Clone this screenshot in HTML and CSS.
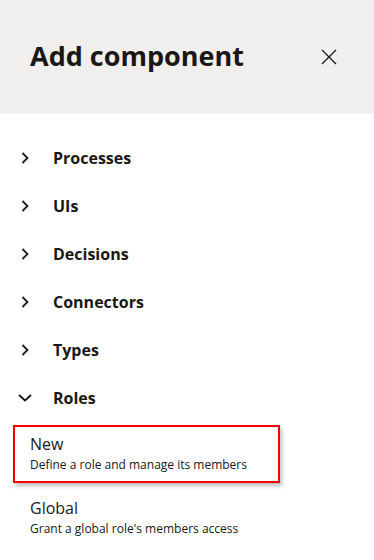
FILE: index.html
```html
<!DOCTYPE html>
<html>
    <head>
        <title>Add component</title>
        <link rel="stylesheet" href="styles.css">
    </head>
    <body>
        <div class="panel">
            <div class="header">
                <div class="title">Add component</div>
                <div class="close">
                    <svg width="16" height="16" viewBox="0 0 16 16"><path d="M1 1L15 15M15 1L1 15" stroke="#1a1816" stroke-width="1.3" fill="none"/></svg>
                </div>
            </div>
            <div class="list">
                <div class="group">
                    <span class="chev"><svg width="12" height="12" viewBox="0 0 12 12"><path d="M3.5 1L8.5 6L3.5 11" stroke="#1a1816" stroke-width="1.8" fill="none"/></svg></span>
                    <span class="label">Processes</span>
                </div>
                <div class="group">
                    <span class="chev"><svg width="12" height="12" viewBox="0 0 12 12"><path d="M3.5 1L8.5 6L3.5 11" stroke="#1a1816" stroke-width="1.8" fill="none"/></svg></span>
                    <span class="label">UIs</span>
                </div>
                <div class="group">
                    <span class="chev"><svg width="12" height="12" viewBox="0 0 12 12"><path d="M3.5 1L8.5 6L3.5 11" stroke="#1a1816" stroke-width="1.8" fill="none"/></svg></span>
                    <span class="label">Decisions</span>
                </div>
                <div class="group">
                    <span class="chev"><svg width="12" height="12" viewBox="0 0 12 12"><path d="M3.5 1L8.5 6L3.5 11" stroke="#1a1816" stroke-width="1.8" fill="none"/></svg></span>
                    <span class="label">Connectors</span>
                </div>
                <div class="group">
                    <span class="chev"><svg width="12" height="12" viewBox="0 0 12 12"><path d="M3.5 1L8.5 6L3.5 11" stroke="#1a1816" stroke-width="1.8" fill="none"/></svg></span>
                    <span class="label">Types</span>
                </div>
                <div class="group">
                    <span class="chev"><svg width="14" height="12" viewBox="0 0 14 12"><path d="M1 3L7 8.5L13 3" stroke="#1a1816" stroke-width="1.8" fill="none"/></svg></span>
                    <span class="label">Roles</span>
                </div>
                <div class="items">
                    <div class="item selected">
                        <div class="name">New</div>
                        <div class="desc">Define a role and manage its members</div>
                    </div>
                    <div class="item">
                        <div class="name">Global</div>
                        <div class="desc">Grant a global role's members access</div>
                    </div>
                </div>
            </div>
        </div>
    </body>
</html>
```
FILE: styles.css
```css
body{
    margin: 0px;
    padding: 0px;
    background: #ffffff;
    font-family: "Open Sans", "Noto Sans", sans-serif;
    color: #1a1816;
}
.panel{
    width: 374px;
    height: 560px;
    overflow: hidden;
}
.header{
    height: 114px;
    background-color: #f1efed;
    display: flex;
    align-items: center;
    justify-content: space-between;
    padding: 0 37px 0 30px;
}
.header .title{
    font-size: 27px;
    font-weight: bold;
    line-height: 36px;
    margin-top: -2px;
}
.header .close{
    width: 16px;
    height: 16px;
    display: flex;
}
.list{
    padding-top: 20px;
}
.group{
    height: 48px;
    display: flex;
    align-items: center;
}
.group .chev{
    width: 53px;
    display: flex;
    justify-content: center;
    box-sizing: border-box;
    padding-right: 4px;
}
.group .label{
    font-size: 16px;
    font-weight: bold;
}
.items{
    padding: 3px 0 0 13px;
}
.item{
    width: 267px;
    height: 58px;
    box-sizing: border-box;
    padding: 6px 0 0 15px;
    border: 2px solid transparent;
}
.item.selected{
    border-color: #f70000;
    box-shadow: 2px 3px 4px rgba(0,0,0,0.25);
    margin-bottom: 6px;
}
.item .name{
    font-size: 16px;
    line-height: 22px;
}
.item .desc{
    font-size: 12px;
    line-height: 20px;
}
```
